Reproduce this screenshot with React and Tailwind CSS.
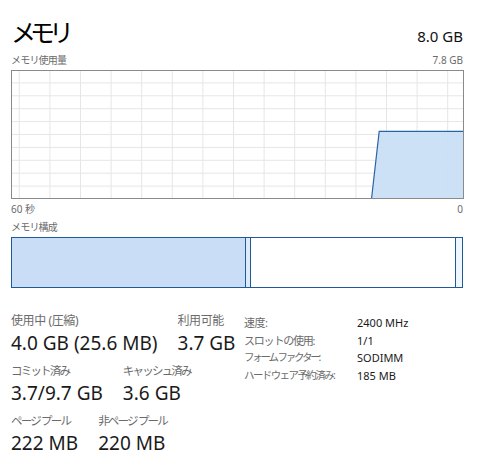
const FONT = { fontFamily: '"Noto Sans", "Noto Sans CJK JP", sans-serif' };

const W = 453;
const H = 129;

function UsageChart() {
  const vlines = [];
  for (let x = 8.3; x < W; x += 30.6) vlines.push(x);
  const hlines = [];
  for (let i = 1; i < 10; i++) hlines.push((H / 10) * i);

  return (
    <svg width={W} height={H} className="block">
      <rect x="0" y="0" width={W} height={H} fill="#ffffff" />
      {vlines.map((x) => (
        <line key={"v" + x} x1={x} y1="0" x2={x} y2={H} stroke="#e6e6e6" strokeWidth="1" />
      ))}
      {hlines.map((y) => (
        <line key={"h" + y} x1="0" y1={y} x2={W} y2={y} stroke="#e6e6e6" strokeWidth="1" />
      ))}
      <polygon points={`360.5,${H} 368.2,61.3 ${W},61.3 ${W},${H}`} fill="#c9def6" fillOpacity="0.95" />
      <polyline points={`360.5,${H} 368.2,61.3 ${W},61.3`} fill="none" stroke="#2a63a3" strokeWidth="1.2" />
      <rect x="0.5" y="0.5" width={W - 1} height={H - 1} fill="none" stroke="#8a8a8a" strokeWidth="1" />
    </svg>
  );
}

function Stat({ label, value, tight }) {
  return (
    <div className="flex flex-col">
      <div className={"leading-[16px] text-[#6b6b6b] " + (tight || "text-[12px] tracking-[-0.4px]")}>{label}</div>
      <div className="text-[19px] leading-[26px] text-[#1a1a1a] mt-[1px]">{value}</div>
    </div>
  );
}

export default function App() {
  const specs = [
    ["速度:", "2400 MHz", "tracking-[-0.5px]"],
    ["スロットの使用:", "1/1", "tracking-[-1.2px]"],
    ["フォーム ファクター:", "SODIMM", "text-[10.5px] tracking-[-2.2px]"],
    ["ハードウェア予約済み:", "185 MB", "text-[10.5px] tracking-[-1.6px]"],
  ];

  return (
    <div className="w-[483px] h-[472px] bg-white pl-[11px] pr-[20px] overflow-hidden" style={FONT}>
      <div className="flex items-end justify-between pt-[15px]">
        <div className="text-[25px] leading-[34px] text-black tracking-[-6px]">メモリ</div>
        <div className="text-[15px] leading-[20px] text-[#111] mb-[3px]">8.0 GB</div>
      </div>
      <div className="flex items-end justify-between mt-[4px] text-[10px] leading-[14px] text-[#6b6b6b]">
        <span className="tracking-[-0.8px]">メモリ使用量</span>
        <span>7.8 GB</span>
      </div>
      <div className="mt-[3px]">
        <UsageChart />
      </div>
      <div className="flex justify-between mt-[3px] text-[10px] leading-[14px] text-[#6b6b6b]">
        <span>60 秒</span>
        <span>0</span>
      </div>
      <div className="mt-[4px] text-[10px] leading-[14px] text-[#6b6b6b] tracking-[-0.8px]">メモリ構成</div>
      <div className="mt-[3px] flex h-[51px] border border-[#1f5a96]">
        <div className="w-[234px] bg-[#c9def6] border-r border-[#1f5a96]" />
        <div className="w-[5px] bg-[#dcebfa] border-r border-[#1f5a96]" />
        <div className="flex-1 bg-white border-r border-[#1f5a96]" />
        <div className="w-[6px] bg-[#eef7fd]" />
      </div>

      <div className="flex mt-[25px]">
        <div className="w-[233px] flex flex-col gap-[7px]">
          <div className="flex gap-[20px]">
            <Stat label="使用中 (圧縮)" value="4.0 GB (25.6 MB)" />
            <Stat label="利用可能" value="3.7 GB" />
          </div>
          <div className="flex gap-[20px]">
            <Stat label="コミット済み" value="3.7/9.7 GB" tight="text-[11.5px] tracking-[-1.8px]" />
            <Stat label="キャッシュ済み" value="3.6 GB" tight="text-[11.5px] tracking-[-1.8px]" />
          </div>
          <div className="flex gap-[20px]">
            <Stat label="ページ プール" value="222 MB" tight="text-[11.5px] tracking-[-1.8px]" />
            <Stat label="非ページ プール" value="220 MB" tight="text-[11.5px] tracking-[-1.8px]" />
          </div>
        </div>
        <div className="flex flex-col pt-[1px] text-[11px] leading-[17.5px]">
          {specs.map(([k, v, t]) => (
            <div key={k} className="flex items-center">
              <span className={"w-[113px] shrink-0 text-[#6b6b6b] " + t}>{k}</span>
              <span className="text-[#1a1a1a]">{v}</span>
            </div>
          ))}
        </div>
      </div>
    </div>
  );
}
